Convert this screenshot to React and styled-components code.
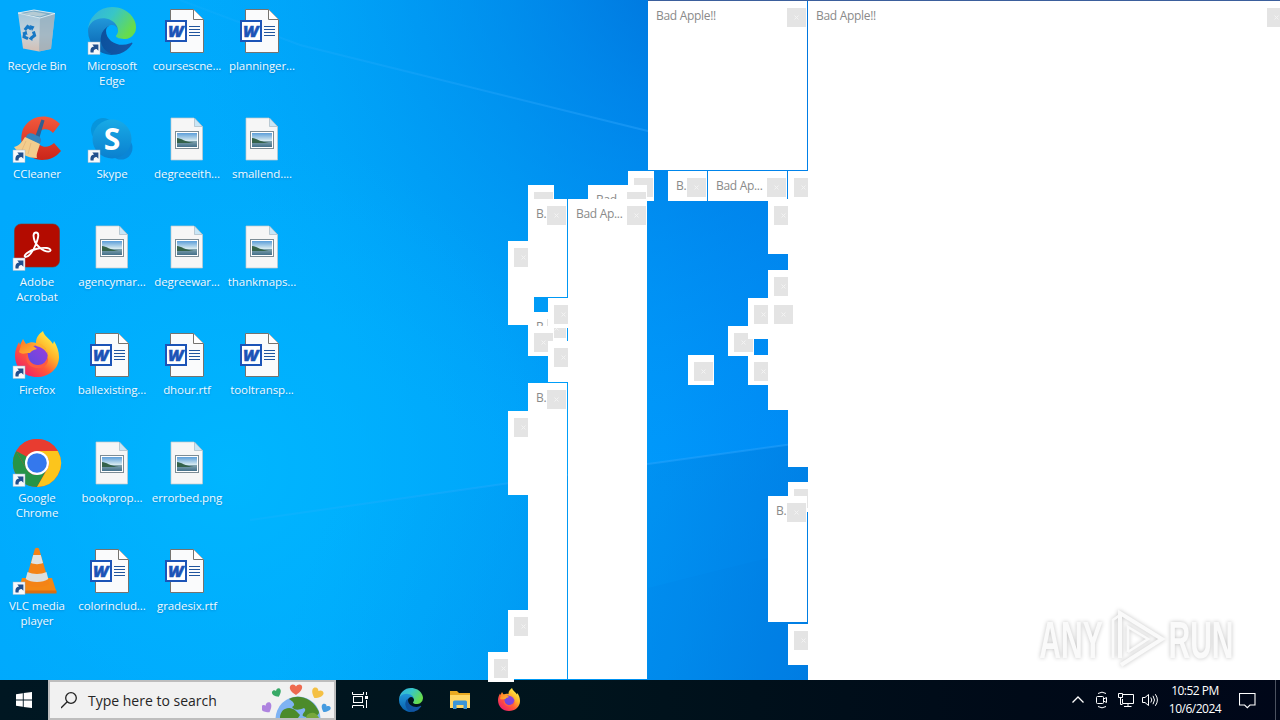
import React from "react";
import styled, { createGlobalStyle } from "styled-components";

const GlobalStyle = createGlobalStyle`
  body {
    margin: 0;
    overflow: hidden;
    font-family: "Open Sans", "Noto Sans", sans-serif;
  }
`;

const Screen = styled.div`
  width: 1280px;
  height: 720px;
  display: flex;
  flex-direction: column;
  overflow: hidden;
`;

const Desktop = styled.main`
  position: relative;
  z-index: 1;
  height: 680px;
`;

const Wallpaper = styled.svg`
  position: absolute;
  top: 0;
  left: 0;
  display: block;
`;

const IconGrid = styled.div`
  position: relative;
  display: grid;
  grid-auto-flow: column;
  grid-template-rows: repeat(6, 108px);
  grid-auto-columns: 75px;
`;

const Shortcut = styled.div`
  width: 74px;
  padding-top: 7px;
  box-sizing: border-box;
  display: flex;
  flex-direction: column;
  align-items: center;
`;

const IconArt = styled.svg`
  width: 48px;
  height: 48px;
  display: block;
  overflow: visible;
`;

const Label = styled.span`
  margin-top: 3px;
  color: #f0faff;
  font-size: 11.5px;
  line-height: 15px;
  text-align: center;
  white-space: pre;
  letter-spacing: -.08px;
  text-shadow: 0 1px 2px rgba(0, 60, 120, .3);
`;

const WindowFrame = styled.section`
  position: absolute;
  left: ${props => props.$x}px;
  top: ${props => props.$y}px;
  width: ${props => props.$w}px;
  height: ${props => props.$h}px;
  box-sizing: border-box;
  padding: 7px 1px 0 ${props => (props.$w < 30 ? 6 : 8)}px;
  display: flex;
  align-items: flex-start;
  justify-content: space-between;
  overflow: hidden;
  background: #fff;
`;

const WindowTitle = styled.span`
  margin-top: 1px;
  color: #8a8a8a;
  font-size: 12px;
  line-height: 14px;
  letter-spacing: -.3px;
  white-space: nowrap;
  flex: 1;
  width: 0;
`;

const CloseButton = styled.span`
  width: 19px;
  height: 19px;
  flex: none;
  display: flex;
  align-items: center;
  justify-content: center;
  background: #e4e4e4;
`;

const TopEdge = styled.div`
  position: absolute;
  top: 0;
  left: 648px;
  right: 0;
  height: 1px;
  background: #3b5f9c;
`;

const Watermark = styled.div`
  position: absolute;
  left: 1038px;
  top: 608px;
  width: 196px;
  height: 64px;
  display: flex;
  align-items: center;
  filter: drop-shadow(0 0 2px rgba(0, 0, 0, .24));
`;

const WatermarkWord = styled.span`
  width: 66px;
  height: 48px;
  display: flex;
  justify-content: center;
  color: #fafafa;
  font: bold 51px/50px "Liberation Sans", sans-serif;
  transform: scaleX(.59);
`;

const Taskbar = styled.footer`
  height: 40px;
  display: flex;
  align-items: center;
  background: linear-gradient(90deg, #001722 0%, #00141d 45%, #000a18 80%, #000719 100%);
`;

const StartButton = styled.div`
  width: 48px;
  height: 40px;
  flex: none;
  display: flex;
  align-items: center;
  justify-content: center;
`;

const SearchBox = styled.div`
  width: 288px;
  height: 40px;
  flex: none;
  box-sizing: border-box;
  border: 2px solid #bdbdbd;
  padding-left: 11px;
  display: flex;
  align-items: center;
  background: #f1f1f1;
  overflow: hidden;
`;

const SearchText = styled.span`
  flex: 1;
  margin-left: 9px;
  color: #252525;
  font-size: 14px;
  white-space: nowrap;
`;

const TaskButton = styled.div`
  width: 49px;
  flex: none;
  display: flex;
  align-items: center;
  justify-content: center;
`;

const Apps = styled.div`
  margin-left: 1px;
  display: flex;
`;

const Tray = styled.div`
  margin-left: auto;
  display: flex;
  align-items: center;
`;

const TrayIcon = styled.svg`
  width: 24px;
  height: 24px;
  display: block;
  fill: none;
  stroke: #fff;
  stroke-width: 1;
`;

const Clock = styled.div`
  width: 66px;
  color: #fff;
  font-size: 12px;
  line-height: 18px;
  letter-spacing: -.5px;
  text-align: center;
`;

const Notifications = styled.div`
  width: 39px;
  margin-right: 8px;
  display: flex;
  justify-content: center;
`;

const ShowDesktop = styled.div`
  width: 4px;
  height: 40px;
  border-left: 1px solid #4b5260;
`;

const ShortcutArrow = () => (
  <g>
    <rect x="0" y="35" width="12" height="12.5" fill="#f7f9fb" stroke="#9cb8ce" strokeWidth=".5" />
    <path d="M2.6 45.4 C2 41.5 3.6 39.6 6 39.4 L4.3 37.6 H10.4 V43.7 L8.6 42 C6.2 42.2 5.4 43.2 5.6 45.4 Z" fill="#214f8d" />
  </g>
);

const RecycleBin = () => (
  <IconArt viewBox="0 0 48 48">
    <defs>
      <linearGradient id="bin" x1="0" y1="0" x2="0" y2="1">
        <stop offset="0" stopColor="#9fc4da" />
        <stop offset=".6" stopColor="#c9d4da" />
        <stop offset="1" stopColor="#d3beb3" />
      </linearGradient>
    </defs>
    <path d="M5 6 L21 3 L42 6.5 L38 42 L26 44.5 L10 41.5 Z" fill="url(#bin)" />
    <path d="M27 11 L42 6.5 L38 42 L26 44.5 Z" fill="#90a9b8" opacity=".65" />
    <path d="M5 6 L21 3 L42 6.5 L27 11 Z" fill="#7aabc6" stroke="#e2eef4" strokeWidth=".9" />
    <path d="M9 7 L20 4.5 L34 7 L27 9.5 Z" fill="#b5cbd4" />
    <g fill="none" stroke="#1678c5" strokeWidth="3">
      <path d="M11.8 23 L14.6 19.6 L18.2 22" />
      <path d="M20.4 24.5 L21.6 28.4 L18 31.2" />
      <path d="M15 31.6 L11 29.8 L11.6 26" />
    </g>
    <path d="M16.5 18 L21.5 19.5 L19 24 Z M19.4 34 L15.5 31.5 L19.4 28.5 Z M9 26 L13.5 23.8 L14.5 28 Z" fill="#1678c5" />
  </IconArt>
);

const EdgeMark = () => (
  <>
    <defs>
      <linearGradient id="edgeDark" x1="0" y1="0" x2="1" y2="0">
        <stop offset="0" stopColor="#0b519d" />
        <stop offset="1" stopColor="#1657a8" />
      </linearGradient>
      <linearGradient id="edgeBlue" x1="0" y1="0" x2="0" y2="1">
        <stop offset="0" stopColor="#239bdc" />
        <stop offset="1" stopColor="#075eac" />
      </linearGradient>
      <linearGradient id="edgeGreen" x1="0" y1="0" x2="1" y2=".5">
        <stop offset="0" stopColor="#31afe2" />
        <stop offset=".5" stopColor="#37c6c8" />
        <stop offset="1" stopColor="#67dc4c" />
      </linearGradient>
    </defs>
    <path fill="url(#edgeDark)" d="M231.07 190.54c-3.4 1.77-6.9 3.33-10.51 4.67a101.94 101.94 0 0 1-35.9 6.46c-47.32 0-88.54-32.55-88.54-74.32a31.48 31.48 0 0 1 16.43-27.31c-42.8 1.8-53.8 46.4-53.8 72.53 0 73.88 68.09 81.37 82.76 81.37 7.91 0 19.84-2.3 27-4.56l1.31-.44a128.34 128.34 0 0 0 66.6-52.8 4 4 0 0 0-5.35-5.6z" />
    <path fill="url(#edgeBlue)" d="M105.73 241.42a79.2 79.2 0 0 1-22.74-21.34 80.72 80.72 0 0 1 29.53-120c3.12-1.47 8.45-4.13 15.54-4a32.35 32.35 0 0 1 25.69 13 31.88 31.88 0 0 1 6.36 18.66c0-.21 24.46-79.6-80-79.6-43.9 0-80 41.66-80 78.21a130.15 130.15 0 0 0 12.11 56 128 128 0 0 0 156.38 67.11 75.55 75.55 0 0 1-62.78-8z" />
    <path fill="url(#edgeGreen)" d="M152.33 148.86c-.81 1.05-3.3 2.5-3.3 5.66 0 2.61 1.7 5.12 4.72 7.23 14.38 10 41.49 8.68 41.56 8.68a59.56 59.56 0 0 0 30.27-8.35A61.38 61.38 0 0 0 256 109.44c.26-22.41-8-37.31-11.34-43.91C223.46 24.05 177.72.17 128 .17a128 128 0 0 0-128 126.2c.48-36.54 36.8-66.05 80-66.05 3.5 0 23.46.34 42 10.07 16.34 8.58 24.9 18.94 30.85 29.21 6.18 10.67 7.28 24.15 7.28 29.52 0 5.37-2.74 13.33-7.8 19.74z" />
  </>
);

const Edge = () => (
  <IconArt viewBox="0 0 48 48">
    <g transform="scale(.1875)"><EdgeMark /></g>
    <ShortcutArrow />
  </IconArt>
);

const CCleaner = () => (
  <IconArt viewBox="0 0 48 48">
    <defs>
      <linearGradient id="cc" x1="0" y1="0" x2="0" y2="1">
        <stop offset="0" stopColor="#f2593d" />
        <stop offset="1" stopColor="#cb2519" />
      </linearGradient>
    </defs>
    <path d="M47 9 C36 -3 17 0 10 14 C4 31 15 45 29 45 C37 45 43 42 48 36 L41 28 C37 32 31 33 27 30 C22 26 22 19 27 16 C31 13 37 14 40 18 Z" fill="url(#cc)" />
    <path d="M28.5 4.5 L31.5 5.5 L26 24 L22 22 Z" fill="#315f91" />
    <path d="M14 20 C18 16 21 20 25 21 C29 23 29 26 26 30 L12 24 Z" fill="#3584bd" />
    <path d="M12 22 L27 29 C25 36 23 39 24 43 C14 43 5 38 1 32 C6 31 9 27 12 22 Z" fill="#f3cd8d" />
    <path d="M13 26 L9 35 M18 28 L15 39" stroke="#e3b478" strokeWidth=".8" />
    <ShortcutArrow />
  </IconArt>
);

const Skype = () => (
  <IconArt viewBox="0 0 48 48">
    <defs>
      <linearGradient id="skype" x1="0" y1="0" x2="0" y2="1">
        <stop offset="0" stopColor="#18aae6" />
        <stop offset="1" stopColor="#0a80cf" />
      </linearGradient>
    </defs>
    <circle cx="15" cy="15" r="12" fill="#0795dc" />
    <circle cx="33" cy="33" r="11.5" fill="#0a86d6" />
    <circle cx="24" cy="24" r="19.5" fill="url(#skype)" />
    <text x="24" y="34.5" textAnchor="middle" fill="#fff" fontFamily="Open Sans, sans-serif" fontWeight="700" fontSize="30">S</text>
    <ShortcutArrow />
  </IconArt>
);

const Acrobat = () => (
  <IconArt viewBox="0 0 48 48">
    <rect x="1.5" y="1" width="45" height="43" rx="6.5" fill="#b30b00" stroke="#87321f" strokeWidth=".6" />
    <path d="M22 19 C19.5 12.5 20.5 9.5 23 9.5 C26 9.5 26 13 23 21 C20 29 15.5 34 12.5 34 C9.5 33 15 27.5 24 25.7 C32 24 38 25 37.5 27.5 C36.5 30.5 27 27.5 22 19 Z" fill="none" stroke="#fff" strokeWidth="1.9" />
    <ShortcutArrow />
  </IconArt>
);

const FirefoxMark = () => (
  <>
    <defs>
      <linearGradient id="ffBody" x1=".85" y1=".1" x2=".2" y2=".9">
        <stop offset="0" stopColor="#fff04a" />
        <stop offset=".35" stopColor="#ffb229" />
        <stop offset=".65" stopColor="#ff5938" />
        <stop offset="1" stopColor="#f02565" />
      </linearGradient>
      <linearGradient id="ffGlobe" x1="0" y1="1" x2="1" y2="0">
        <stop offset="0" stopColor="#5b4be0" />
        <stop offset="1" stopColor="#9b3ddb" />
      </linearGradient>
      <linearGradient id="ffFox" x1="0" y1="0" x2="1" y2="1">
        <stop offset="0" stopColor="#ff7b24" />
        <stop offset="1" stopColor="#ffba32" />
      </linearGradient>
    </defs>
    <path d="M30 0 C31 5 37 8 40 13 L41 10 C44 15 46 20 46 26 C46 38 36 46 24 46 C11 46 2 37 2 24 C2 19 4 15 6 11 L7 14 L10 8 L13 13 C17 11 20 11 23 12 C23 6 26 3 30 0 Z" fill="url(#ffBody)" />
    <circle cx="24.5" cy="24.5" r="10.2" fill="url(#ffGlobe)" />
    <path d="M9 11 C13 14 16 13 19 14 L24 18 C20 19 18 20 17 22 C12 22 9 24 6 21 Z" fill="url(#ffFox)" />
    <path d="M24 12 C30 13 34 17 35 24 C32 18 28 16 23 15 Z" fill="#ffb12c" />
    <path d="M14.6 22 C15 30 19 34 25 34 C30 34 33 31 35 26 C36 34 30 38 23 37 C15 36 11 29 14.6 22 Z" fill="#ff5a41" />
  </>
);

const Firefox = () => (
  <IconArt viewBox="0 0 48 48">
    <FirefoxMark />
    <ShortcutArrow />
  </IconArt>
);

const Chrome = () => (
  <IconArt viewBox="0 0 48 48">
    <circle cx="24" cy="24" r="24" fill="#e83c30" />
    <path d="M3.2 12 L13.6 30 A12 12 0 0 0 24 36 L34 30 L24 48 A24 24 0 0 1 3.2 12 Z" fill="#269447" />
    <path d="M44.8 12 A24 24 0 0 1 24 48 L34.4 30 A12 12 0 0 0 34.4 18 L24 12 Z" fill="#fcc51c" />
    <path d="M3.2 12 A24 24 0 0 1 44.8 12 H24 A12 12 0 0 0 13.6 18 V30 Z" fill="#e83c30" />
    <path d="M3.2 12 L13.6 30 L18 25 V20 Z" fill="#269447" />
    <circle cx="24" cy="24" r="12" fill="#fff" />
    <circle cx="24" cy="24" r="9.8" fill="#3478ed" />
    <ShortcutArrow />
  </IconArt>
);

const Vlc = () => (
  <IconArt viewBox="0 0 48 48">
    <path d="M9 31 H39 L43.5 45 H5 Z" fill="#f48714" />
    <path d="M5 43.5 H43.5 V46.5 H5 Z" fill="#d96e12" />
    <path d="M22 1.5 Q24 0 26 1.5 L36 36 C34 41 14 41 12 36 Z" fill="#f48316" />
    <path d="M20.2 8 H27.8 L30 16 C27 17.5 21 17.5 18 16 Z" fill="#dfe3e3" />
    <path d="M14.5 25 C20 27.5 28 27.5 33.5 25 L35.3 32 C30 36 18 36 12.7 32 Z" fill="#dcdedd" />
    <ShortcutArrow />
  </IconArt>
);

const WordFile = () => (
  <IconArt viewBox="0 0 48 48">
    <path d="M7.5 2.5 H30.5 L40.5 12.5 V45.5 H7.5 Z" fill="#fafbfc" stroke="#75736f" strokeWidth="1" />
    <path d="M30.5 2.5 V12.5 H40.5" fill="#fff" stroke="#75736f" strokeWidth="1" />
    <path d="M26 19.5 H37 M26 22.5 H37 M26 25.5 H37 M26 28.5 H37" stroke="#20559e" strokeWidth="1" />
    <rect x="3" y="14" width="20" height="20" fill="#fff" stroke="#1c54b7" strokeWidth="2" />
    <text x="12.8" y="29.8" textAnchor="middle" fill="#1c54b7" stroke="#1c54b7" strokeWidth=".5" fontFamily="Open Sans, sans-serif" fontStyle="italic" fontWeight="800" fontSize="16.5">W</text>
  </IconArt>
);

const ImageFile = () => (
  <IconArt viewBox="0 0 48 48">
    <defs>
      <linearGradient id="photo" x1="0" y1="0" x2="0" y2="1">
        <stop offset="0" stopColor="#5c9ed9" />
        <stop offset=".55" stopColor="#d8ebf0" />
        <stop offset=".6" stopColor="#7fa1ad" />
        <stop offset="1" stopColor="#44708a" />
      </linearGradient>
    </defs>
    <path d="M8 3 H31 L39.5 11.5 V45 H8 Z" fill="#f6f6f6" stroke="#c3c8cb" strokeWidth=".7" />
    <path d="M31.5 3 V11.5 H39.5 Z" fill="#c9e6f6" stroke="#a8b9c4" strokeWidth=".7" />
    <rect x="12.5" y="16.5" width="23" height="17" fill="#fff" stroke="#7c8c95" />
    <rect x="14" y="18" width="20" height="14" fill="url(#photo)" />
    <path d="M14 23 C18 23 22 27 31 28 H14 Z" fill="#34624a" />
  </IconArt>
);

const shortcuts = [
  { label: "Recycle Bin", Icon: RecycleBin },
  { label: "CCleaner", Icon: CCleaner },
  { label: "Adobe\nAcrobat", Icon: Acrobat },
  { label: "Firefox", Icon: Firefox },
  { label: "Google\nChrome", Icon: Chrome },
  { label: "VLC media\nplayer", Icon: Vlc },
  { label: "Microsoft\nEdge", Icon: Edge },
  { label: "Skype", Icon: Skype },
  { label: "agencymar...", Icon: ImageFile },
  { label: "ballexisting...", Icon: WordFile },
  { label: "bookprop...", Icon: ImageFile },
  { label: "colorinclud...", Icon: WordFile },
  { label: "coursescne...", Icon: WordFile },
  { label: "degreeeith...", Icon: ImageFile },
  { label: "degreewar...", Icon: ImageFile },
  { label: "dhour.rtf", Icon: WordFile },
  { label: "errorbed.png", Icon: ImageFile },
  { label: "gradesix.rtf", Icon: WordFile },
  { label: "planninger...", Icon: WordFile },
  { label: "smallend....", Icon: ImageFile },
  { label: "thankmaps...", Icon: ImageFile },
  { label: "tooltransp...", Icon: WordFile },
];

// back to front
const windows = [
  { x: 628, y: 171, w: 26, h: 30 },
  { x: 528, y: 185, w: 26, h: 30 },
  { x: 588, y: 185, w: 59, h: 30, title: "Bad..." },
  { x: 508, y: 241, w: 26, h: 84 },
  { x: 528, y: 199, w: 39, h: 98, title: "B." },
  { x: 528, y: 312, w: 39, h: 30, title: "B." },
  { x: 548, y: 298, w: 26, h: 30 },
  { x: 528, y: 326, w: 26, h: 30 },
  { x: 548, y: 341, w: 26, h: 41 },
  { x: 508, y: 411, w: 26, h: 84 },
  { x: 488, y: 652, w: 26, h: 30 },
  { x: 508, y: 610, w: 26, h: 69 },
  { x: 528, y: 383, w: 39, h: 296, title: "B." },
  { x: 568, y: 199, w: 79, h: 480, title: "Bad Ap..." },
  { x: 648, y: 1, w: 159, h: 169, title: "Bad Apple!!" },
  { x: 668, y: 171, w: 39, h: 30, title: "B." },
  { x: 708, y: 171, w: 79, h: 30, title: "Bad Ap..." },
  { x: 768, y: 199, w: 26, h: 55 },
  { x: 768, y: 270, w: 26, h: 41 },
  { x: 788, y: 171, w: 26, h: 296 },
  { x: 688, y: 355, w: 26, h: 30 },
  { x: 728, y: 326, w: 26, h: 30 },
  { x: 748, y: 298, w: 26, h: 41 },
  { x: 748, y: 355, w: 26, h: 30 },
  { x: 768, y: 298, w: 26, h: 112 },
  { x: 788, y: 482, w: 26, h: 30 },
  { x: 768, y: 496, w: 39, h: 126, title: "B." },
  { x: 788, y: 624, w: 26, h: 41 },
  { x: 808, y: 1, w: 479, h: 679, title: "Bad Apple!!" },
];

const AppleWindow = ({ x, y, w, h, title }) => (
  <WindowFrame $x={x} $y={y} $w={w} $h={h}>
    {title && <WindowTitle>{title}</WindowTitle>}
    <CloseButton>
      <svg width="7" height="7" viewBox="0 0 7 7">
        <path d="M1.5 1.5 L5.5 5.5 M5.5 1.5 L1.5 5.5" stroke="#f3f3f3" strokeWidth="1" />
      </svg>
    </CloseButton>
  </WindowFrame>
);

const Background = () => (
  <Wallpaper width="1280" height="680" viewBox="0 0 1280 680">
    <defs>
      <linearGradient id="sky" x1="0" y1="0" x2="830" y2="0" gradientUnits="userSpaceOnUse">
        <stop offset="0" stopColor="#00a9fd" />
        <stop offset=".4" stopColor="#00abfc" />
        <stop offset=".62" stopColor="#00a3fa" />
        <stop offset=".8" stopColor="#0098fb" />
        <stop offset="1" stopColor="#0088f4" />
      </linearGradient>
      <radialGradient id="topShade" cx="740" cy="-60" r="560" gradientUnits="userSpaceOnUse">
        <stop offset="0" stopColor="#0060c8" stopOpacity=".8" />
        <stop offset=".35" stopColor="#0074dc" stopOpacity=".55" />
        <stop offset="1" stopColor="#0090f0" stopOpacity="0" />
      </radialGradient>
      <radialGradient id="glow" cx="230" cy="470" r="340" gradientUnits="userSpaceOnUse">
        <stop offset="0" stopColor="#00b8ff" stopOpacity=".85" />
        <stop offset="1" stopColor="#00b0ff" stopOpacity="0" />
      </radialGradient>
      <linearGradient id="lowShade" x1="330" y1="500" x2="850" y2="680" gradientUnits="userSpaceOnUse">
        <stop offset="0" stopColor="#0098ee" stopOpacity="0" />
        <stop offset="1" stopColor="#0074d8" stopOpacity=".7" />
      </linearGradient>
      <linearGradient id="beam" x1="150" y1="0" x2="660" y2="0" gradientUnits="userSpaceOnUse">
        <stop offset="0" stopColor="#35b5ff" stopOpacity=".1" />
        <stop offset="1" stopColor="#35a8ff" stopOpacity=".4" />
      </linearGradient>
    </defs>
    <rect width="1280" height="680" fill="url(#sky)" />
    <rect width="1280" height="680" fill="url(#topShade)" />
    <rect width="1280" height="680" fill="url(#glow)" />
    <path d="M0 548 L300 512 L510 483 L808 442 V680 H0 Z" fill="url(#lowShade)" />
    <path d="M180 0 L300 45 L660 134" fill="none" stroke="url(#beam)" strokeWidth="2" />
    <path d="M250 520 L510 483 L808 442" fill="none" stroke="url(#beam)" strokeWidth="2" />
    <path d="M648 588 L808 548 V680 H648 Z" fill="#0078d8" opacity=".08" />
  </Wallpaper>
);

const Heart = ({ x, y, angle = 0, size = 1, color }) => (
  <path
    transform={`translate(${x} ${y}) rotate(${angle}) scale(${size})`}
    d="M0 5.5 C-5 2.5 -7.5 -1 -5.5 -4 C-3.5 -6 -1 -5 0 -3 C1 -5 4 -6 5.7 -4 C7.3 -1 4.5 2.5 0 5.5 Z"
    fill={color}
  />
);

const SearchArt = () => (
  <svg width="72" height="36" viewBox="0 0 72 36">
    <circle cx="36" cy="37" r="22.5" fill="#7fb3f3" />
    <path d="M27 17 C37 11 52 17 57 30 C57 34 53 34 51 31 C47 32 47 37 41 34 C39 31 46 29 42 26 C37 28 33 29 30 25 C34 23 32 20 27 17 Z" fill="#4c8b2b" />
    <path d="M23 27 C30 24 34 29 38 33 L36 36 H18 C18 32 20 28 23 27 Z" fill="#4c8b2b" />
    <path d="M45 33 C50 29 55 31 57 36 H44 Z" fill="#77a83c" />
    <Heart x={34} y={7.5} color="#ee6a50" />
    <Heart x={15} y={11} angle={-25} size={.75} color="#38a966" />
    <Heart x={55} y={11.5} angle={30} size={.95} color="#f4c044" />
    <Heart x={5} y={26} angle={-30} size={.9} color="#ae83df" />
    <Heart x={63.5} y={26.5} angle={30} size={.75} color="#449be0" />
  </svg>
);

const App = () => (
  <Screen>
    <GlobalStyle />
    <Desktop>
      <Background />
      <IconGrid>
        {shortcuts.map(({ label, Icon }) => (
          <Shortcut key={label}>
            <Icon />
            <Label>{label}</Label>
          </Shortcut>
        ))}
      </IconGrid>
      <TopEdge />
      {windows.map(win => (
        <AppleWindow key={`${win.x}-${win.y}`} {...win} />
      ))}
      <Watermark>
        <WatermarkWord>ANY</WatermarkWord>
        <svg width="64" height="64" viewBox="0 0 64 64" fill="none" stroke="#fafafa" strokeWidth="4">
          <path d="M16 50 V5 L58 31 L17 57" />
          <path d="M9 50 V12 L16 7 M24 44 V19 L44 31 L24 44" strokeWidth="2.6" />
        </svg>
        <WatermarkWord>RUN</WatermarkWord>
      </Watermark>
    </Desktop>
    <Taskbar>
      <StartButton>
        <svg width="16" height="16" viewBox="0 0 16 16" fill="#fff">
          <path d="M0 2.2 L6.8 1.2 V7.5 H0 Z M7.7 1.1 L16 0 V7.5 H7.7 Z M0 8.4 H6.8 V14.8 L0 13.8 Z M7.7 8.4 H16 V16 L7.7 14.9 Z" />
        </svg>
      </StartButton>
      <SearchBox>
        <svg width="18" height="18" viewBox="0 0 18 18" fill="none" stroke="#222" strokeWidth="1.3">
          <circle cx="10" cy="7" r="5.3" />
          <path d="M6.2 10.8 L0 17" />
        </svg>
        <SearchText>Type here to search</SearchText>
        <SearchArt />
      </SearchBox>
      <TaskButton>
        <svg width="17" height="16" viewBox="0 0 17 16" fill="none" stroke="#fff">
          <path d="M.5 0 V2.5 H11.5 V0 M.5 16 V13.5 H11.5 V16 M14.5 0 V3 M14.5 8 V16" />
          <rect x="1.5" y="4.5" width="9" height="6" />
          <path d="M13 5.5 H16" strokeWidth="3" />
        </svg>
      </TaskButton>
      <Apps>
        <TaskButton>
          <svg width="24" height="24" viewBox="0 0 256 256"><EdgeMark /></svg>
        </TaskButton>
        <TaskButton>
          <svg width="22" height="20" viewBox="0 0 22 20">
            <path d="M1 1 H8 L10 3 H21 V18 H1 Z" fill="#e9aa22" />
            <path d="M1 5 H21 V18 H1 Z" fill="#ffd766" />
            <path d="M4 19 V12 Q4 10.5 5.5 10.5 H16.5 Q18 10.5 18 12 V19 H14.5 V15 H7.5 V19 Z" fill="#3a95d7" />
          </svg>
        </TaskButton>
        <TaskButton>
          <svg width="24" height="24" viewBox="0 0 48 48"><FirefoxMark /></svg>
        </TaskButton>
      </Apps>
      <Tray>
        <TrayIcon viewBox="0 0 24 24"><path d="M6.5 14.5 L12 9 L17.5 14.5" strokeWidth="1.3" /></TrayIcon>
        <TrayIcon viewBox="0 0 24 24">
          <rect x="6.5" y="8.5" width="7" height="7" rx="1" />
          <path d="M13.5 11 L16.5 9.5 V14.5 L13.5 13 M8 5.5 Q12 2.8 16 5.5 M8 18.5 Q12 21.2 16 18.5" />
        </TrayIcon>
        <TrayIcon viewBox="0 0 24 24">
          <path d="M9 6.5 H19.5 V15.5 H8.5 V11 M14 15.5 V18.5 M10 18.5 H17.5 M4.5 5.5 H8.5 V9.5 H4.5 Z M6.5 9.5 V16.5 H8.5" />
        </TrayIcon>
        <TrayIcon viewBox="0 0 24 24">
          <path d="M4.5 9.5 H7 L10.5 6.5 V17.5 L7 14.5 H4.5 Z M12.8 9.5 Q14.8 12 12.8 14.5 M15 7.8 Q18 12 15 16.2 M17.3 6.2 Q21.5 12 17.3 17.8" />
        </TrayIcon>
        <Clock>10:52 PM<br />10/6/2024</Clock>
        <Notifications>
          <svg width="17" height="17" viewBox="0 0 17 17" fill="none" stroke="#fff">
            <path d="M.5 1.5 H16 V13 H11 L8.3 15.7 L5.6 13 H.5 Z" strokeWidth="1.1" />
          </svg>
        </Notifications>
        <ShowDesktop />
      </Tray>
    </Taskbar>
  </Screen>
);

export default App;
